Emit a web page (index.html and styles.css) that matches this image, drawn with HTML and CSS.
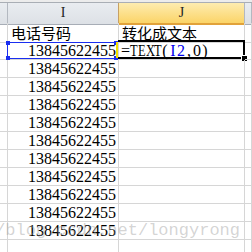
FILE: index.html
```html
<!DOCTYPE html>
<html>
<head>
<meta charset="utf-8">
<link rel="stylesheet" href="styles.css">
</head>
<body>
<div class="sheet">
  <div class="strip"></div>
  <div class="hdr-row">
    <div class="hcell"></div>
    <div class="hcell">I</div>
    <div class="hcell sel">J</div>
    <div class="hcell"></div>
  </div>
  <div class="row first">
    <div class="cell"></div>
    <div class="cell cjk">电话号码</div>
    <div class="cell cjk">转化成文本</div>
    <div class="cell"></div>
  </div>
  <div class="row">
    <div class="cell"></div>
    <div class="cell num ref">13845622455<span class="refbox"><i class="h tl"></i><i class="h tr"></i><i class="h bl"></i><i class="h br"></i></span></div>
    <div class="cell formula active"><span class="ch">=</span><span class="ch w">T</span><span class="ch w">E</span><span class="ch w">X</span><span class="ch w">T</span><span class="ch">(</span><span class="ch blue">I</span><span class="ch blue">2</span><span class="ch">,</span><span class="ch">0</span><span class="ch">)</span><span class="selbox"></span><span class="editbar"></span><span class="handle"></span></div>
    <div class="cell"></div>
  </div>
  <div class="row"><div class="cell"></div><div class="cell num">13845622455</div><div class="cell"></div><div class="cell"></div></div>
  <div class="row"><div class="cell"></div><div class="cell num">13845622455</div><div class="cell"></div><div class="cell"></div></div>
  <div class="row"><div class="cell"></div><div class="cell num">13845622455</div><div class="cell"></div><div class="cell"></div></div>
  <div class="row"><div class="cell"></div><div class="cell num">13845622455</div><div class="cell"></div><div class="cell"></div></div>
  <div class="row"><div class="cell"></div><div class="cell num">13845622455</div><div class="cell"></div><div class="cell"></div></div>
  <div class="row"><div class="cell"></div><div class="cell num">13845622455</div><div class="cell"></div><div class="cell"></div></div>
  <div class="row"><div class="cell"></div><div class="cell num">13845622455</div><div class="cell"></div><div class="cell"></div></div>
  <div class="row"><div class="cell"></div><div class="cell num">13845622455</div><div class="cell"></div><div class="cell"></div></div>
  <div class="row"><div class="cell"></div><div class="cell num">13845622455</div><div class="cell"></div><div class="cell"></div></div>
  <div class="row"><div class="cell"></div><div class="cell num">13845622455</div><div class="cell"></div><div class="cell"></div></div>
  <div class="row"><div class="cell"></div><div class="cell"></div><div class="cell"></div><div class="cell"></div></div>
  <div class="watermark">http://blog.csdn.net/longyrong</div>
</div>
</body>
</html>
```
FILE: styles.css
```css
html, body {
  margin: 0;
  padding: 0;
  background: #ffffff;
  overflow: hidden;
}
.sheet {
  position: relative;
  width: 252px;
  height: 252px;
  overflow: hidden;
  background: #ffffff;
}
.strip {
  height: 3px;
  box-sizing: border-box;
  background: #ececec;
  border-bottom: 1px solid #a9aeb5;
}
.hdr-row, .row {
  display: grid;
  grid-template-columns: 8px 111px 126px 7px;
}
.hdr-row {
  height: 20px;
}
.hcell {
  box-sizing: border-box;
  border-right: 1px solid #b3b8c0;
  border-bottom: 1px solid #a7adb6;
  background: linear-gradient(#e9ecf0, #dde1e6);
  font-family: "Liberation Serif", serif;
  font-size: 14px;
  color: #222222;
  text-align: center;
  line-height: 19px;
}
.hcell.sel {
  background: linear-gradient(#fdecb0, #fbd468);
  border-bottom: 2px solid #e1a23a;
  line-height: 20px;
}
.hdr-row .hcell:nth-child(2) {
  border-right-color: #c6a064;
}
.row {
  height: 18px;
}
.row.first {
  height: 19px;
}
.cell {
  position: relative;
  box-sizing: border-box;
  border-right: 1px solid #d6d6d6;
  border-bottom: 1px solid #d6d6d6;
  font-family: "Liberation Serif", serif;
  font-size: 16px;
  color: #000000;
  white-space: nowrap;
  line-height: 17px;
  padding: 0 3px;
}
.cjk {
  font-family: "Noto Sans CJK SC", sans-serif;
  font-size: 15px;
  line-height: 18px;
  padding-left: 3px;
  padding-top: 1px;
}
.num {
  text-align: right;
  padding-right: 2px;
}
.formula {
  padding-left: 2px;
  display: flex;
}
.ch {
  display: inline-block;
  width: 8px;
  text-align: center;
  font-size: 16px;
}
.ch.w {
  transform: scaleX(0.78);
}
.blue {
  color: #0000ee;
}
.refbox {
  position: absolute;
  left: -1px;
  top: 0;
  right: 1px;
  bottom: 0;
  border: 1px solid #1a2ef0;
}
.h {
  position: absolute;
  width: 4px;
  height: 4px;
  background: #1a2ef0;
}
.h.tl { left: -2px; top: -2px; }
.h.tr { right: -2px; top: -2px; }
.h.bl { left: -2px; bottom: -2px; }
.h.br { right: -2px; bottom: -2px; }
.selbox {
  position: absolute;
  left: -1px;
  top: -2px;
  right: -1px;
  bottom: 0;
  border: 2px solid #000000;
  border-left: none;
}
.editbar {
  position: absolute;
  left: -3px;
  top: 0;
  bottom: 1px;
  width: 2px;
  background: #f5e000;
}
.handle {
  position: absolute;
  right: -3px;
  bottom: -2px;
  width: 5px;
  height: 5px;
  background: #000000;
  border: 1px solid #ffffff;
  border-right: none;
  border-bottom: none;
}
.watermark {
  position: absolute;
  right: 12px;
  top: 221px;
  font-family: "Liberation Mono", monospace;
  font-size: 17px;
  color: rgba(160, 160, 160, 0.45);
  white-space: nowrap;
  pointer-events: none;
}
```
